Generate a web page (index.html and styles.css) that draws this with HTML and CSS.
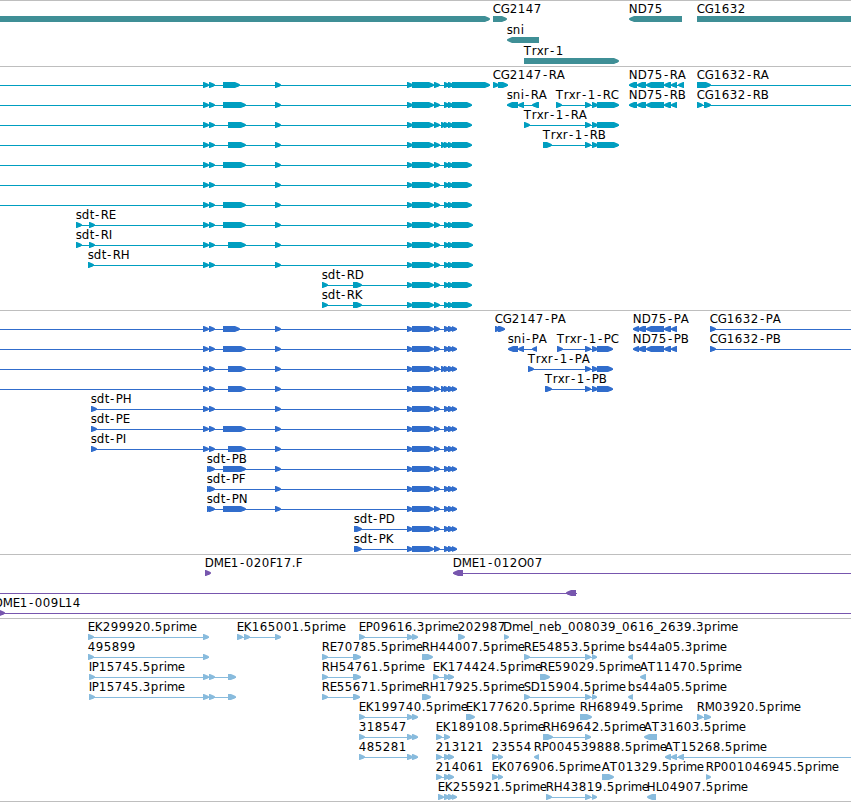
FILE: index.html
```html
<!DOCTYPE html>
<html lang="en">

<head>
    <meta charset="utf-8">
    <title>Genome Region</title>
    <link rel="stylesheet" href="styles.css">
</head>

<body>
    <main class="browser">
        <section class="track genes" id="genes"></section>
        <section class="track transcripts" id="transcripts"></section>
        <section class="track proteins" id="proteins"></section>
        <section class="track clones" id="clones"></section>
        <section class="track ests" id="ests"></section>
    </main>
    <script src="tracks.js"></script>
</body>

</html>
```

FILE: styles.css
```css
* {
    box-sizing: border-box;
}

body {
    margin: 0;
    background: #fff;
    overflow: hidden;
}

.browser {
    width: 851px;
    display: flex;
    flex-direction: column;
    border-bottom: 1px solid #bebebe;
}

.track {
    border-top: 1px solid #bebebe;
}

.track svg {
    display: block;
    width: 100%;
    height: 100%;
}

.genes {
    height: 66px;
    color: #3f8f96;
}

.transcripts {
    height: 244px;
    color: #009ec0;
}

.proteins {
    height: 244px;
    color: #316dcc;
}

.clones {
    height: 64px;
    color: #7756ae;
}

.ests {
    height: 183px;
    color: #88bbdd;
}

.intron {
    fill: currentColor;
}

.exon {
    fill: currentColor;
}

.label {
    fill: #000;
    font-family: "DejaVu Sans", sans-serif;
    font-size: 11.8px;
}
```

FILE: tracks.js
```js
const SVG = "http://www.w3.org/2000/svg";
const WIDTH = 851;

// label letter widths in px, digits are 8
const advance = {
    A: 8, B: 7, C: 8, D: 9, E: 7, F: 6, G: 9, H: 9, I: 3, K: 8, L: 6, M: 10, N: 9, O: 9, P: 7, R: 8, S: 7, T: 8,
    a: 7, b: 8, d: 8, e: 7, i: 3, l: 3, m: 11, n: 8, p: 8, r: 5, s: 6, t: 4, x: 7,
    "-": 7, ".": 4, "_": 6
};

// exons shared by the sdt isoforms
const first = "203-209 209-215 ";
const mid = "275-281 ";
const tail = "407-413 412-434 434-440 ";
const tri = "444-450 448-454 ";
const quad = "441-447 444-450 448-454 ";
const cds = "452-457";
const trxr = "585-591 592-598 597-";
const nd75 = "646-664 664-671 671-677";

const genes = [
    { row: 0, exons: "0-490" },
    { row: 0, name: "CG2147", exons: "493-507" },
    { row: 1, name: "sni", exons: "507-539", rev: true },
    { row: 2, name: "Trxr-1", exons: "524-619" },
    { row: 0, name: "ND75", exons: "629-682", rev: true },
    { row: 0, name: "CG1632", exons: "697-860" }
];

const transcripts = [
    { row: 0, from: 0, exons: first + "223-240 " + mid + tail + tri + "452-490" },
    { row: 1, from: 0, exons: first + "223-246 " + mid + tail + tri + "452-472" },
    { row: 2, from: 0, exons: first + "228-246 " + mid + tail + quad + "452-472" },
    { row: 3, from: 0, exons: first + "228-246 " + mid + tail + quad + "452-472" },
    { row: 4, from: 0, exons: first + "223-246 " + mid + tail + tri + "452-472" },
    { row: 5, from: 0, exons: first + mid + tail + tri + "452-472" },
    { row: 6, from: 0, exons: first + "223-246 " + mid + tail + tri + "452-472" },
    { row: 7, name: "sdt-RE", exons: "76-82 89-95 " + first + "223-246 " + mid + tail + tri + "452-473" },
    { row: 8, name: "sdt-RI", exons: "76-82 89-95 " + first + "228-246 " + mid + tail + tri + "452-473" },
    { row: 9, name: "sdt-RH", exons: "88-94 " + first + mid + tail + tri + "452-473" },
    { row: 10, name: "sdt-RD", exons: "322-328 353-362 " + tail + tri + "452-472" },
    { row: 11, name: "sdt-RK", exons: "322-328 353-362 " + tail + tri + "452-472" },
    { row: 0, name: "CG2147-RA", exons: "493-499 498-508" },
    { row: 1, name: "sni-RA", exons: "507-518 518-524 532-539", rev: true },
    { row: 1, name: "Trxr-1-RC", exons: "556-562 " + trxr + "619" },
    { row: 2, name: "Trxr-1-RA", exons: "524-530 " + trxr + "619" },
    { row: 3, name: "Trxr-1-RB", exons: "543-552 " + trxr + "619" },
    { row: 0, name: "ND75-RA", exons: "629-637 637-646 " + nd75 + " 678-684", rev: true },
    { row: 1, name: "ND75-RB", exons: "629-637 637-646 " + nd75, rev: true },
    { row: 0, name: "CG1632-RA", exons: "697-711", to: WIDTH },
    { row: 1, name: "CG1632-RB", exons: "697-703 704-711", to: WIDTH }
];

const proteins = [
    { row: 0, from: 0, exons: first + "223-240 " + mid + tail + tri + cds },
    { row: 1, from: 0, exons: first + "223-246 " + mid + tail + tri + cds },
    { row: 2, from: 0, exons: first + "228-246 " + mid + tail + quad + cds },
    { row: 3, from: 0, exons: first + "228-246 " + mid + tail + quad + cds },
    { row: 4, name: "sdt-PH", exons: "91-97 " + first + mid + tail + tri + cds },
    { row: 5, name: "sdt-PE", exons: "91-97 " + first + "223-246 " + mid + tail + tri + cds },
    { row: 6, name: "sdt-PI", exons: "91-97 " + first + "228-246 " + mid + tail + tri + cds },
    { row: 7, name: "sdt-PB", exons: "207-213 209-215 223-246 " + mid + tail + tri + cds },
    { row: 8, name: "sdt-PF", exons: "207-213 209-215 " + mid + tail + tri + cds },
    { row: 9, name: "sdt-PN", exons: "207-213 209-215 223-246 " + mid + tail + tri + cds },
    { row: 10, name: "sdt-PD", exons: "354-362 " + tail + tri + cds },
    { row: 11, name: "sdt-PK", exons: "354-362 " + tail + tri + cds },
    { row: 0, name: "CG2147-PA", exons: "495-501 498-505" },
    { row: 1, name: "sni-PA", exons: "508-518 518-524 532-537", rev: true },
    { row: 1, name: "Trxr-1-PC", exons: "557-563 " + trxr + "613" },
    { row: 2, name: "Trxr-1-PA", exons: "528-534 " + trxr + "613" },
    { row: 3, name: "Trxr-1-PB", exons: "545-552 " + trxr + "613" },
    { row: 0, name: "ND75-PA", exons: "633-639 638-646 " + nd75, rev: true },
    { row: 1, name: "ND75-PB", exons: "633-639 638-646 " + nd75, rev: true },
    { row: 0, name: "CG1632-PA", exons: "710-716", to: WIDTH },
    { row: 1, name: "CG1632-PB", exons: "710-716", to: WIDTH }
];

const clones = [
    { row: 0, name: "DME1-020F17.F", exons: "205-211" },
    { row: 0, name: "DME1-012O07", exons: "453-463", rev: true, to: WIDTH },
    { row: 1, exons: "566-576", rev: true, from: 0, to: 577 },
    { row: 2, name: "DME1-009L14", labelX: -6, exons: "-1-5", to: WIDTH }
];

const ests = [
    { row: 0, name: "EK299920.5prime", exons: "88-94 203-209" },
    { row: 1, name: "495899", exons: "88-94 203-209" },
    { row: 2, name: "IP15745.5prime", exons: "89-95 203-209 209-215 228-236" },
    { row: 3, name: "IP15745.3prime", exons: "89-95 203-209 209-215 228-236" },
    { row: 0, name: "EK165001.5prime", exons: "237-243 244-250 275-281" },
    { row: 1, name: "RE70785.5prime", exons: "322-328 353-361" },
    { row: 2, name: "RH54761.5prime", exons: "322-328 353-361" },
    { row: 3, name: "RE55671.5prime", exons: "322-328 353-360" },
    { row: 0, name: "EP09616.3prime", exons: "359-365 407-413 412-418" },
    { row: 4, name: "EK199740.5prime", exons: "359-365 407-413 412-418" },
    { row: 5, name: "318547", exons: "359-365 407-413 412-418" },
    { row: 6, name: "485281", exons: "359-365 407-413 412-418" },
    { row: 1, name: "RH44007.5prime", exons: "422-433" },
    { row: 3, name: "RH17925.5prime", exons: "422-431" },
    { row: 2, name: "EK174424.5prime", exons: "433-439 444-450 448-454" },
    { row: 5, name: "EK189108.5prime", exons: "436-442 444-450" },
    { row: 6, name: "213121", exons: "436-442 444-450 448-454" },
    { row: 7, name: "214061", exons: "436-442 444-450 448-454" },
    { row: 8, name: "EK255921.5prime", exons: "438-444 444-450 448-454 452-457" },
    { row: 0, name: "202987", exons: "458-465" },
    { row: 4, name: "EK177620.5prime", exons: "466-475" },
    { row: 6, name: "23554", exons: "492-498 498-503" },
    { row: 7, name: "EK076906.5prime", exons: "492-498 498-503" },
    { row: 0, name: "Dmel_neb_008039_0616_2639.3prime", labelX: 503.4, exons: "504-509" },
    { row: 1, name: "RE54853.5prime", exons: "524-530 585-591 592-597" },
    { row: 3, name: "SD15904.5prime", exons: "524-530 585-591 592-597" },
    { row: 6, name: "RP004539888.5prime", exons: "534-539", rev: true },
    { row: 2, name: "RE59029.5prime", exons: "540-550" },
    { row: 5, name: "RH69642.5prime", exons: "543-553 585-591" },
    { row: 8, name: "RH43819.5prime", exons: "546-552 585-591 592-597" },
    { row: 4, name: "RH68949.5prime", exons: "580-592" },
    { row: 7, name: "AT01329.5prime", exons: "602-614" },
    { row: 1, name: "bs44a05.3prime", exons: "628-633", rev: true },
    { row: 3, name: "bs44a05.5prime", exons: "628-633", rev: true },
    { row: 2, name: "AT11470.5prime", exons: "640-646", rev: true },
    { row: 5, name: "AT31603.5prime", exons: "644-657", rev: true },
    { row: 8, name: "HL04907.5prime", exons: "647-656", rev: true },
    { row: 6, name: "AT15268.5prime", exons: "665-671 671-677 678-684", rev: true, to: WIDTH },
    { row: 4, name: "RM03920.5prime", exons: "697-703 704-711" },
    { row: 7, name: "RP001046945.5prime", exons: "706-711" }
];

function add(parent, tag, attrs) {
    const el = document.createElementNS(SVG, tag);
    for (const key in attrs) {
        el.setAttribute(key, attrs[key]);
    }
    parent.appendChild(el);
    return el;
}

// box with a blunt arrow head, drawn from the tail to the tip and back
function arrow(start, end, y, rev) {
    const dir = rev ? -1 : 1;
    const tailX = rev ? end : start;
    const tip = rev ? start : end;
    const head = Math.min(5, end - start);
    return [
        [tailX, y - 3],
        [tip - dir * head, y - 3],
        [tip - dir, y - 1.2],
        [tip, y - 0.6],
        [tip, y + 0.6],
        [tip - dir, y + 1.2],
        [tip - dir * head, y + 3],
        [tailX, y + 3]
    ].join(" ");
}

function drawLabel(svg, name, x, y) {
    const xs = [];
    x -= 0.3;
    for (const ch of name) {
        // the hyphen is narrow, keep it centred in its cell
        xs.push(ch === "-" ? x + 1.2 : x);
        x += advance[ch] || 8;
    }
    add(svg, "text", { class: "label", x: xs.join(" "), y: y }).textContent = name;
}

function drawTrack(id, features, pitch) {
    const svg = add(document.getElementById(id), "svg", {});
    for (const f of features) {
        const y = 18 + f.row * pitch;
        const exons = f.exons.trim().split(" ").map(e => e.match(/^(-?\d+)-(\d+)$/).slice(1).map(Number));
        const from = f.from !== undefined ? f.from : exons[0][0];
        const to = f.to || exons[exons.length - 1][1];
        if (exons.length > 1 || f.from !== undefined || f.to) {
            add(svg, "rect", { class: "intron", x: from, y: y, width: to - from, height: 1 });
        }
        for (const [start, end] of exons) {
            add(svg, "polygon", { class: "exon", points: arrow(start, end, y, f.rev) });
        }
        if (f.name) {
            drawLabel(svg, f.name, f.labelX || exons[0][0], y - 6);
        }
    }
}

drawTrack("genes", genes, 21);
drawTrack("transcripts", transcripts, 20);
drawTrack("proteins", proteins, 20);
drawTrack("clones", clones, 20);
drawTrack("ests", ests, 20);
```
